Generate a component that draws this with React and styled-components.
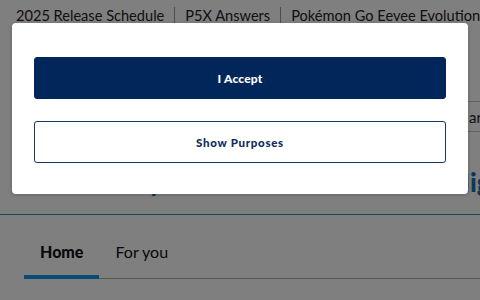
import React from "react";
import styled, { createGlobalStyle } from "styled-components";

const GlobalStyle = createGlobalStyle`
  html, body {
    margin: 0;
    padding: 0;
    background: #ffffff;
    overflow: hidden;
  }
  body {
    font-family: Lato, "Open Sans", Arial, sans-serif;
  }
`;

const Page = styled.div`
  position: relative;
  width: 480px;
  height: 300px;
  overflow: hidden;
  background: #ffffff;
`;

const TopNav = styled.nav`
  display: flex;
  align-items: center;
  height: 30px;
  padding: 0 0 0 16px;
  white-space: nowrap;
  color: #222;
  font-size: 14.6px;
`;

const NavLink = styled.span`
  display: block;
`;

const Sep = styled.span`
  display: block;
  flex: 0 0 1px;
  width: 1px;
  height: 16px;
  margin: 0 10px;
  background: #999;
`;

const ToolRow = styled.div`
  display: flex;
  justify-content: flex-end;
  margin-top: 71px;
`;

const SearchBox = styled.div`
  flex: 0 0 auto;
  width: 200px;
  margin-right: -130px;
  height: 31px;
  box-sizing: border-box;
  border: 1px solid #c4c4c4;
  padding-left: 10px;
  display: flex;
  align-items: center;
  font-size: 15px;
  color: #222;
  white-space: nowrap;
`;

const Headline = styled.h1`
  margin: 35px 0 0 24px;
  font-size: 26px;
  line-height: 30px;
  font-weight: 900;
  color: #1a6fb0;
  white-space: nowrap;
`;

const Rule = styled.hr`
  margin: 17px 0 0;
  border: 0;
  height: 1px;
  background: #2e8bc0;
`;

const Tabs = styled.div`
  display: flex;
  margin: 27px 0 0 24px;
  border-bottom: 1px solid #aaa;
`;

const Tab = styled.div`
  padding: 0 16px 13px;
  font-size: 16px;
  line-height: 20px;
  color: #111;
  font-weight: ${(p) => (p.$active ? 900 : 400)};
  border-bottom: 4px solid ${(p) => (p.$active ? "#1694e6" : "transparent")};
  margin-bottom: -1px;
`;

const Overlay = styled.div`
  position: absolute;
  inset: 0;
  background: rgba(0, 0, 0, 0.5);
  padding: 23px 12px 0;
`;

const Modal = styled.div`
  background: #ffffff;
  border-radius: 4px;
  padding: 34px 22px 31px;
  display: flex;
  flex-direction: column;
  gap: 22px;
  box-shadow: 0 1px 4px rgba(0, 0, 0, 0.2);
`;

const Button = styled.button`
  height: 42px;
  width: 100%;
  padding: 0;
  border-radius: 3px;
  font-family: Lato, "Open Sans", Arial, sans-serif;
  font-weight: 900;
  font-size: ${(p) => (p.$outline ? "11.5px" : "12px")};
  letter-spacing: ${(p) => (p.$outline ? "0.7px" : "0.2px")};
  cursor: pointer;
  background: ${(p) => (p.$outline ? "#ffffff" : "#00265a")};
  color: ${(p) => (p.$outline ? "#0e2d5c" : "#ffffff")};
  border: 1px solid ${(p) => (p.$outline ? "#163865" : "#00265a")};
`;

export default function App() {
  return (
    <Page>
      <GlobalStyle />
      <TopNav>
        <NavLink>2025 Release Schedule</NavLink>
        <Sep />
        <NavLink>P5X Answers</NavLink>
        <Sep />
        <NavLink>Pokémon Go Eevee Evolutions</NavLink>
      </TopNav>
      <ToolRow>
        <SearchBox>Search articles</SearchBox>
      </ToolRow>
      <Headline>The Weekly Trends and Latest News Highlights</Headline>
      <Rule />
      <Tabs>
        <Tab $active>Home</Tab>
        <Tab>For you</Tab>
      </Tabs>
      <Overlay>
        <Modal>
          <Button>I Accept</Button>
          <Button $outline>Show Purposes</Button>
        </Modal>
      </Overlay>
    </Page>
  );
}
